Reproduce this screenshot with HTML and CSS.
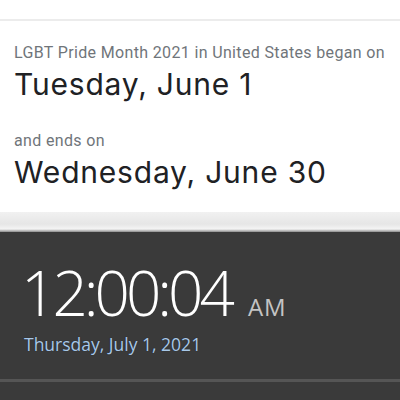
FILE: index.html
```html
<!DOCTYPE html>
<html>
<head>
<meta charset="utf-8">
<link rel="stylesheet" href="styles.css">
</head>
<body>
<div class="page">
  <div class="card">
    <div class="top-rule"></div>
    <div class="content">
      <p class="label">LGBT Pride Month 2021 in United States began on</p>
      <p class="date">Tuesday, June 1</p>
      <p class="label label-ends">and ends on</p>
      <p class="date">Wednesday, June 30</p>
    </div>
  </div>
  <div class="shade"></div>
  <div class="clock">
    <div class="time-row">
      <span class="time">12:00:04</span>
      <span class="ampm">AM</span>
    </div>
    <div class="clock-date">Thursday, July 1, 2021</div>
    <div class="bottom-rule"></div>
  </div>
</div>
</body>
</html>
```
FILE: styles.css
```css
html, body {
  margin: 0;
  padding: 0;
}
body {
  width: 400px;
  height: 400px;
  overflow: hidden;
  background: #3a3a3a;
}
.page {
  display: flex;
  flex-direction: column;
  height: 400px;
}
.card {
  background: #fff;
  height: 212px;
  display: flex;
  flex-direction: column;
}
.top-rule {
  margin-top: 19px;
  height: 2px;
  background: #ececec;
}
.content {
  padding: 22px 14px 0 14px;
}
.label {
  margin: 0;
  font-family: Roboto, "Liberation Sans", sans-serif;
  font-size: 16px;
  letter-spacing: 0.35px;
  line-height: 20px;
  color: #70757a;
  white-space: nowrap;
}
.label-ends {
  margin-top: 30px;
}
.date {
  margin: 4px 0 0 0;
  font-family: Inter, "Open Sans", sans-serif;
  font-size: 30px;
  letter-spacing: 0.8px;
  line-height: 34px;
  color: #202124;
  white-space: nowrap;
}
.shade {
  height: 20px;
  background: linear-gradient(#f1f1f1, #e6e6e6 60%, #f4f4f4 85%, #8a8a8a);
}
.clock {
  flex: 1;
  background: #3a3a3a;
  padding: 28px 0 0 21px;
  display: flex;
  flex-direction: column;
}
.time-row {
  display: flex;
  align-items: baseline;
  gap: 17px;
}
.time {
  font-family: "Open Sans", sans-serif;
  font-weight: 300;
  font-size: 62px;
  letter-spacing: -4px;
  line-height: 64px;
  color: #fff;
}
.ampm {
  font-family: "Open Sans", sans-serif;
  font-size: 24px;
  letter-spacing: 1px;
  color: #c4c4c4;
}
.clock-date {
  margin: 8px 0 0 3px;
  font-family: "Open Sans", sans-serif;
  font-size: 17.5px;
  color: #a9c8e8;
  text-shadow: 0 0 1px #1c2430;
}
.bottom-rule {
  margin: 23px 0 0 -21px;
  height: 3px;
  background: #555;
}
```
